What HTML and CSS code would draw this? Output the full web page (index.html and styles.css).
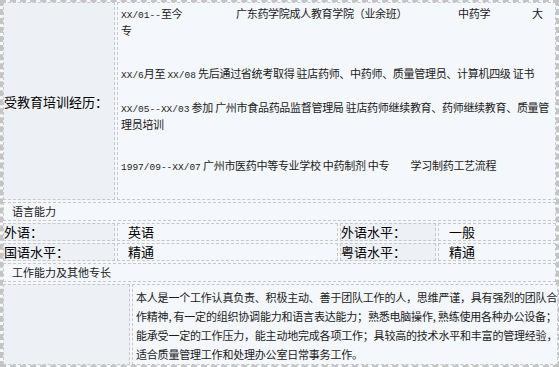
FILE: index.html
```html
<!DOCTYPE html>
<html lang="zh-CN">
<head>
<meta charset="utf-8">
<title>个人简历</title>
<link rel="stylesheet" href="styles.css">
</head>
<body>
<div class="sheet">
  <div class="edu">
    <div class="cell label edu-label">受教育培训经历：</div>
    <div class="cell detail">
      <p class="entry first"><span class="when"><span class="d">XX/01--</span>至今</span><span class="school">广东药学院成人教育学院（业余班）</span><span class="major">中药学</span>大专</p>
      <p class="entry second"><span class="d">XX/6</span>月至 <span class="d">XX/08</span> 先后通过省统考取得 驻店药师、中药师、质量管理员、计算机四级 证书</p>
      <p class="entry third"><span class="d">XX/05--XX/03</span> 参加 广州市食品药品监督管理局 驻店药师继续教育、药师继续教育、质量管理员培训</p>
      <p class="entry fourth"><span class="d">1997/09--XX/07</span> 广州市医药中等专业学校 中药制剂 中专　　学习制药工艺流程</p>
    </div>
  </div>

  <div class="cell caption">语言能力</div>

  <div class="lang">
    <div class="cell label">外语：</div>
    <div class="cell value">英语</div>
    <div class="cell label">外语水平：</div>
    <div class="cell value">一般</div>
    <div class="cell label">国语水平：</div>
    <div class="cell value">精通</div>
    <div class="cell label">粤语水平：</div>
    <div class="cell value">精通</div>
  </div>

  <div class="cell caption">工作能力及其他专长</div>

  <div class="summary">
    <div class="cell label"></div>
    <div class="cell about">
      <span class="line">本人是一个工作认真负责、积极主动、善于团队工作的人，思维严谨，具有强烈的团队合</span>
      <span class="line">作精神, 有一定的组织协调能力和语言表达能力；熟悉电脑操作, 熟练使用各种办公设备；</span>
      <span class="line">能承受一定的工作压力，能主动地完成各项工作；具较高的技术水平和丰富的管理经验，</span>
      <span class="line">适合质量管理工作和处理办公室日常事务工作。</span>
    </div>
  </div>
</div>
</body>
</html>
```

FILE: styles.css
```css
html, body {
  margin: 0;
  padding: 0;
  background: #f4f7fb;
}

body {
  font-family: "Noto Sans CJK SC", "Noto Sans", sans-serif;
  color: #111;
  width: 559px;
  height: 367px;
  overflow: hidden;
}

.sheet {
  box-sizing: border-box;
  width: 559px;
  height: 367px;
  border: 3px dashed #c4c4c4;
  border-top-width: 2px;
  border-bottom-width: 2px;
  display: flex;
  flex-direction: column;
  gap: 2px;
  background: #f4f7fb;
}

.cell {
  box-sizing: border-box;
  border: 1px dashed #c8c8c8;
  background: #f4f7fb;
}

.label {
  background: #edf0f4;
  font-size: 13px;
  line-height: 16px;
  color: #000;
  white-space: nowrap;
}

/* education block */
.edu {
  display: grid;
  grid-template-columns: 112px 1fr;
  gap: 2px;
  height: 199px;
}

.edu-label {
  display: flex;
  align-items: center;
  padding-top: 2px;
}

.detail {
  padding: 3px 3px 0 3px;
  font-size: 11px;
  line-height: 15px;
  color: #1a1a1a;
  letter-spacing: -0.3px;
}

.entry {
  margin: 0;
}

.entry.second { margin-top: 28px; }
.entry.third { margin-top: 17px; }
.entry.fourth { margin-top: 26px; }

.d {
  font-family: "Liberation Mono", monospace;
  font-size: 9.5px;
  letter-spacing: 0;
  color: #222;
}

.when,
.school,
.major {
  display: inline-block;
  white-space: nowrap;
}

.when { width: 115px; }
.school { width: 222px; }
.major { width: 74px; }

/* section captions */
.caption {
  height: 19px;
  padding-left: 8px;
  font-size: 11px;
  line-height: 17px;
  color: #1a1a1a;
}

/* language grid */
.lang {
  display: grid;
  grid-template-columns: 112px 221px 96px 1fr;
  grid-auto-rows: 18px;
  gap: 2px;
}

.lang .label {
  line-height: 16px;
  padding-left: 0;
}

.value {
  font-size: 13px;
  line-height: 16px;
  padding-left: 10px;
  color: #000;
}

/* self assessment */
.summary {
  flex: 1;
  display: grid;
  grid-template-columns: 127px 1fr;
  gap: 2px;
}

.about {
  padding: 3px 0 0 3px;
  font-size: 11px;
  line-height: 19px;
  letter-spacing: -0.2px;
  color: #1a1a1a;
}

.line {
  display: block;
  white-space: nowrap;
}
```
